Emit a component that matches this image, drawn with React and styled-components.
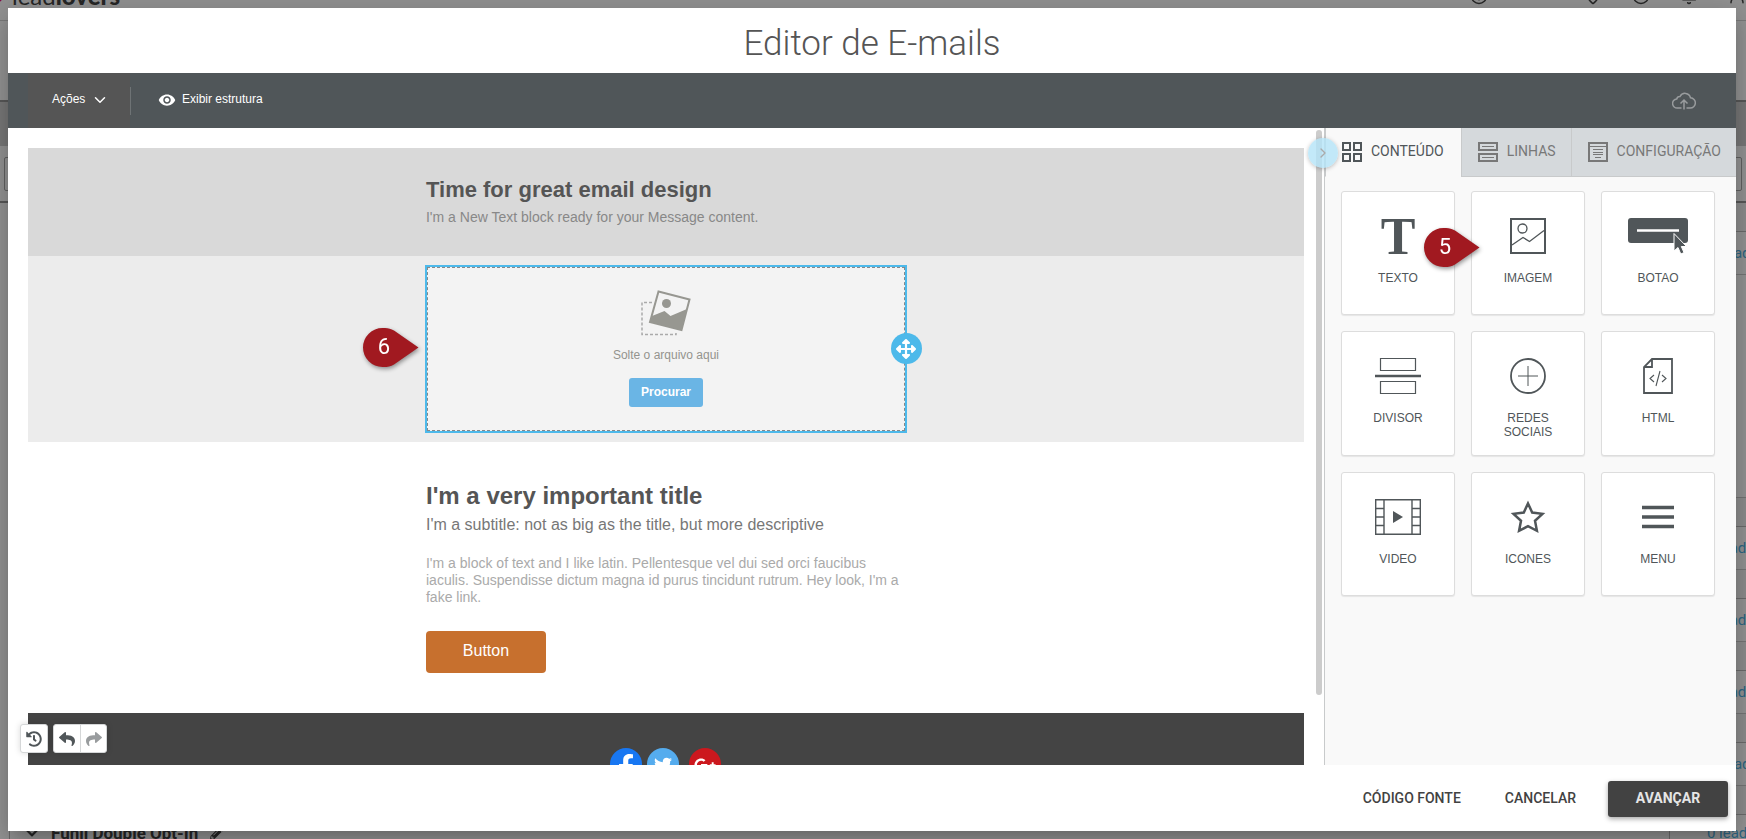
import React from 'react';
import styled, { createGlobalStyle, css } from 'styled-components';
import {
  FaArrowsAlt,
  FaChevronDown,
  FaFacebookF,
  FaGooglePlusG,
  FaHistory,
  FaPencilAlt,
  FaReply,
  FaShare,
  FaTwitter,
} from 'react-icons/fa';
import { MdRemoveRedEye } from 'react-icons/md';
import { Bell, ChevronDown, ChevronRight, CircleHelp, Clock, MapPin, UserRound } from 'lucide-react';

const GlobalStyle = createGlobalStyle`
  *, *::before, *::after {
    box-sizing: border-box;
  }

  body {
    margin: 0;
    background: #fff;
    font-family: 'Liberation Sans', Arial, sans-serif;
  }

  h1, h2, p {
    margin: 0;
  }

  button {
    margin: 0;
    padding: 0;
    border: 0;
    background: none;
    font-family: inherit;
    cursor: pointer;
  }
`;

/* ---------- page behind the modal ---------- */

const Screen = styled.div`
  position: relative;
  height: 100vh;
  overflow: hidden;
`;

const Page = styled.div`
  margin-top: -28px;
  font-family: Roboto, sans-serif;
  color: #444;
`;

const PageHeader = styled.header`
  display: flex;
  align-items: center;
  justify-content: space-between;
  height: 49px;
  border-bottom: 1px solid #d4d4d4;
`;

const Logo = styled.a`
  display: flex;
  align-items: center;
  font-family: Lato, sans-serif;
  font-size: 24px;
  line-height: 30px;
  color: #444;
  text-decoration: none;

  svg {
    color: #e3127e;
    margin-left: -12px;
  }

  b {
    font-weight: 900;
  }
`;

const PageNav = styled.nav`
  display: flex;
  align-items: center;
  gap: 30px;

  svg:first-child {
    margin-right: 66px;
  }
`;

const PageBand = styled.div`
  height: ${(props) => props.$height}px;
  background: ${(props) => (props.$dark ? '#d0d0d0' : '#fff')};
  border-bottom: ${(props) => (props.$strong ? 2 : 1)}px solid
    ${(props) => (props.$strong ? '#999' : props.$plain ? 'transparent' : '#c8c8c8')};
`;

const SearchBand = styled(PageBand)`
  padding: 11px 4px;
`;

const SearchInput = styled.input`
  display: block;
  width: 100%;
  height: 34px;
  border: 1px solid #aaa;
  border-radius: 2px;
  background: #fff;
`;

const FunnelList = styled.div`
  margin-left: 9px;
  border-left: 1px solid #bbb;
`;

const FunnelHead = styled.div`
  height: 29px;
  background: #f4f4f4;
  border-bottom: 1px solid #bbb;
`;

const LeadRow = styled.div`
  display: flex;
  justify-content: flex-end;
  align-items: center;
  height: 43px;
  margin-right: -16px;
  border-bottom: 1px solid #ccc;
`;

const LeadCell = styled.div`
  display: flex;
  align-items: center;
  justify-content: center;
  align-self: stretch;
  width: 64px;
`;

const LeadLink = styled.a`
  font-size: 15px;
  color: #4fb2e4;
  text-decoration: none;
  white-space: nowrap;
`;

const FunnelRow = styled.div`
  display: flex;
  align-items: center;
  height: 36px;
  margin-right: -16px;
  padding-left: 15px;
  gap: 12px;

  ${LeadCell} {
    width: 93px;
    padding-left: 30px;
    margin-left: auto;
    border-left: 1px solid #bbb;
  }
`;

const FunnelTitle = styled.h2`
  font-size: 17px;
  font-weight: 700;
  line-height: 20px;
`;

/* ---------- modal ---------- */

const Overlay = styled.div`
  position: absolute;
  inset: 0;
  display: flex;
  padding: 8px 10px 8px 8px;
  background: rgba(0, 0, 0, 0.43);
`;

const Modal = styled.div`
  flex: 1;
  min-width: 0;
  display: flex;
  flex-direction: column;
  background: #fff;
  box-shadow: 0 11px 15px -7px rgba(0, 0, 0, 0.2), 0 6px 26px 2px rgba(0, 0, 0, 0.18);
`;

const ModalTitle = styled.h1`
  height: 65px;
  padding-top: 6px;
  font-family: Roboto, sans-serif;
  font-size: 35px;
  font-weight: 300;
  line-height: 59px;
  text-align: center;
  color: #555;
`;

const Toolbar = styled.div`
  display: flex;
  align-items: center;
  height: 55px;
  padding: 0 40px 0 20px;
  background: #505659;
`;

const ToolbarButton = styled.button`
  display: flex;
  align-items: center;
  height: 55px;
  padding: 0 24px 4px;
  font-size: 12px;
  color: #fff;
  background: ${(props) => (props.$active ? '#555' : 'transparent')};

  svg {
    position: relative;
    top: 1px;
  }
`;

const ActionsButton = styled(ToolbarButton)`
  gap: 6px;
  width: 102px;
  padding-right: 20px;
`;

const StructureButton = styled(ToolbarButton)`
  gap: 6px;
  padding-left: 27px;
`;

const ToolbarDivider = styled.span`
  width: 1px;
  height: 28px;
  background: #6e7375;
`;

const CloudIcon = styled.svg`
  margin-left: auto;
`;

const Body = styled.div`
  position: relative;
  flex: 1;
  min-height: 0;
  display: flex;
`;

/* ---------- email canvas ---------- */

const Canvas = styled.main`
  position: relative;
  flex: 1;
  min-width: 0;
  display: flex;
`;

const EmailScroll = styled.div`
  flex: 1;
  padding: 20px 12px 0 20px;
  overflow: hidden;
`;

const Scrollbar = styled.div`
  width: 8px;
  padding: 2px 2px 0 0;
`;

const ScrollThumb = styled.div`
  width: 6px;
  height: 89%;
  border-radius: 3px;
  background: #ccc;
`;

const EmailRow = styled.section`
  display: flex;
  justify-content: center;
  padding: ${(props) => props.$padding};
  background: ${(props) => props.$background};
`;

const EmailColumn = styled.div`
  width: 480px;
`;

const Heading = styled.h2`
  font-size: ${(props) => props.$size}px;
  line-height: 28px;
  color: #555;
`;

const Subtitle = styled.p`
  margin-top: 4px;
  font-size: 16px;
  line-height: 22px;
  color: #777;
`;

const Intro = styled.p`
  margin-top: 4px;
  font-size: 14px;
  line-height: 18px;
  color: #888;
`;

const Paragraph = styled.p`
  margin: 19px 0 25px;
  font-size: 14px;
  line-height: 17px;
  color: #aaa;
`;

const EmailButton = styled.button`
  display: block;
  width: 120px;
  height: 42px;
  padding-bottom: 2px;
  border-radius: 4px;
  background: #c7702e;
  color: #fff;
  font-size: 16px;
`;

const ImageBlock = styled.div`
  position: relative;
  width: 482px;
  height: 168px;
  border: 2px solid #4db9ea;
  background: #f3f3f3;
`;

const DropArea = styled.div`
  display: flex;
  flex-direction: column;
  align-items: center;
  height: 100%;
  padding-top: 22px;
  border: 1px dashed #888;
`;

const DropText = styled.p`
  margin: 11px 0 15px;
  font-size: 12px;
  line-height: 16px;
  color: #93938e;
`;

const BrowseButton = styled.button`
  width: 74px;
  height: 29px;
  padding-bottom: 2px;
  border-radius: 3px;
  background: #6ab5e5;
  color: #fff;
  font-size: 12px;
  font-weight: 700;
`;

const MoveHandle = styled.button`
  position: absolute;
  top: 66px;
  right: -17px;
  display: flex;
  align-items: center;
  justify-content: center;
  width: 31px;
  height: 31px;
  border-radius: 50%;
  background: #4db9ea;
  color: #fff;
`;

const Socials = styled.div`
  display: flex;
  gap: 5px;

  a:last-child {
    margin-left: 5px;
  }
`;

const SocialLink = styled.a`
  display: flex;
  align-items: flex-start;
  justify-content: center;
  width: 32px;
  height: 32px;
  padding-top: ${(props) => props.$top}px;
  border-radius: 50%;
  background: ${(props) => props.$color};
  color: #fff;
`;

const HistoryBar = styled.div`
  position: absolute;
  left: 12px;
  bottom: 12px;
  display: flex;
  gap: 5px;
`;

const HistoryGroup = styled.div`
  display: flex;
  border: 1px solid #d5d7d8;
  border-radius: 3px;
  background: #fff;
  box-shadow: 0 0 6px rgba(0, 0, 0, 0.15);
`;

const HistoryButton = styled.button`
  display: flex;
  align-items: center;
  justify-content: center;
  width: 26px;
  height: 27px;
  color: ${(props) => (props.$muted ? '#999c9e' : '#505659')};

  & + & {
    border-left: 1px solid #d5d7d8;
  }
`;

/* ---------- sidebar ---------- */

const Sidebar = styled.aside`
  position: relative;
  flex: 0 0 412px;
  border-left: 1px solid #c8cacb;
  background: #f9f9f9;
`;

const CollapseButton = styled.button`
  position: absolute;
  top: 10px;
  left: -17px;
  display: flex;
  align-items: center;
  justify-content: center;
  width: 30px;
  height: 30px;
  border-radius: 50%;
  background: rgba(180, 228, 247, 0.8);
  box-shadow: 0 1px 4px rgba(0, 0, 0, 0.25);
  color: #aaa;
`;

const Tabs = styled.div`
  display: flex;
`;

const Tab = styled.button`
  display: flex;
  align-items: center;
  gap: 9px;
  height: 49px;
  padding: 0 15px 0 16px;
  border-left: 1px solid #c8cacb;
  border-bottom: 1px solid #c8cacb;
  background: #d5d9dc;
  color: #787878;
  font-family: Roboto, sans-serif;
  font-size: 14px;
  white-space: nowrap;

  &:last-child {
    flex: 1;
  }

  span {
    padding-bottom: 2px;
  }

  ${(props) =>
    props.$active &&
    css`
      padding-right: 17px;
      border-bottom-color: transparent;
      background: transparent;
      color: #505659;
    `}
`;

const Tiles = styled.div`
  display: grid;
  grid-template-columns: repeat(3, 1fr);
  gap: 16px;
  padding: 14px 21px 0 16px;
`;

const Tile = styled.button`
  position: relative;
  display: flex;
  flex-direction: column;
  align-items: center;
  gap: 17px;
  min-height: 124px;
  padding: 26px 16px 16px;
  border: 1px solid #ddd;
  border-radius: 3px;
  background: #fff;
  box-shadow: 0 1px 1px rgba(0, 0, 0, 0.08);
  color: #505659;
  font-size: 12px;
  line-height: 14px;
`;

const TextGlyph = styled.span`
  height: 36px;
  font-family: 'Liberation Serif', serif;
  font-size: 52px;
  font-weight: 700;
  line-height: 37px;
`;

/* ---------- step markers ---------- */

const Marker = styled.div`
  position: absolute;
  left: ${(props) => props.$left}px;
  top: ${(props) => props.$top}px;
  width: 56px;
  height: 40px;
  color: #fff;
  font-family: Roboto, sans-serif;
  font-size: 22px;
  line-height: 37px;
  filter: drop-shadow(1px 2px 2px rgba(0, 0, 0, 0.4));

  svg {
    position: absolute;
    inset: 0;
  }

  span {
    position: relative;
    display: block;
    width: 42px;
    text-align: center;
  }
`;

/* ---------- footer ---------- */

const ModalFooter = styled.footer`
  display: flex;
  align-items: center;
  justify-content: flex-end;
  height: 66px;
  padding: 2px 8px 0;
  gap: 8px;
`;

const FooterButton = styled.button`
  height: 36px;
  padding: 0 18px 2px;
  border-radius: 3px;
  font-family: Roboto, sans-serif;
  font-size: 14px;
  font-weight: 500;
  color: #424242;
`;

const NextButton = styled(FooterButton)`
  width: 120px;
  margin-left: 6px;
  background: #424242;
  color: #e6e6e6;
  font-weight: 700;
  box-shadow: 0 2px 5px rgba(0, 0, 0, 0.35);
`;

const StepMarker = ({ number, left, top }) => (
  <Marker $left={left} $top={top}>
    <svg width="56" height="40" viewBox="0 0 56 40">
      <path
        d="M55.500 19.500 L31 36.500 C27.500 38.500 23.500 39.200 19.500 39 A19.500 19.500 0 0 1 19.500 0 C23.500 -0.200 27.500 0.500 31 2.500 Z"
        fill="#a11920"
      />
    </svg>
    <span>{number}</span>
  </Marker>
);

const ContentIcon = () => (
  <svg width="20" height="20" viewBox="0 0 20 20" fill="none" stroke="#505659" strokeWidth="2">
    <path d="M1 1h7v7H1zM12 1h7v7h-7zM1 12h7v7H1zM12 12h7v7h-7z" />
  </svg>
);

const RowsIcon = () => (
  <svg width="20" height="20" viewBox="0 0 20 20" fill="none" stroke="#787878" strokeWidth="2">
    <path d="M1 1h18v7H1zM1 12h18v7H1z" />
    <path d="M4 4.500h12M4 15.500h12" strokeWidth="1" />
  </svg>
);

const SettingsIcon = () => (
  <svg width="20" height="20" viewBox="0 0 20 20" fill="none" stroke="#787878">
    <path d="M1 1h18v18H1z" strokeWidth="2" />
    <path d="M2 4.500h16M5 7.500h10M5 10.500h10M5 12.500h10M7 15.500h6" />
  </svg>
);

const ImageIcon = () => (
  <svg width="36" height="36" viewBox="0 0 36 36" fill="none" stroke="#505659">
    <path d="M1 1h34v34H1z" strokeWidth="2" />
    <circle cx="12.500" cy="10.500" r="4.500" strokeWidth="1.300" />
    <path d="M2 27l11-7.500 6.500 4L34 12.500" strokeWidth="1.300" />
  </svg>
);

const ButtonIcon = () => (
  <svg width="60" height="36" viewBox="0 0 60 36">
    <rect width="60" height="25" rx="3" fill="#505659" />
    <path d="M9 12.500h42" stroke="#fff" strokeWidth="2.500" />
    <path
      d="M46 15.500v17.500l4-3.500 2.800 6.500 3.200-1.400-2.700-6.100h5.200z"
      fill="#505659"
      stroke="#fff"
      strokeWidth="1"
    />
  </svg>
);

const DividerIcon = () => (
  <svg width="46" height="36" viewBox="0 0 46 36" fill="none" stroke="#505659">
    <path d="M5.500.5h35v12h-35zM5.500 23.500h35v12h-35z" strokeWidth="1.200" />
    <path d="M0 18h46" strokeWidth="2.500" />
  </svg>
);

const SocialIcon = () => (
  <svg width="36" height="36" viewBox="0 0 36 36" fill="none" stroke="#505659">
    <circle cx="18" cy="18" r="17" strokeWidth="1.800" />
    <path d="M8 18h20M18 8v20" strokeWidth="1" />
  </svg>
);

const HtmlIcon = () => (
  <svg width="30" height="36" viewBox="0 0 30 36" fill="none" stroke="#505659">
    <path d="M9 1h20v34H1V9z M9 1v8H1" strokeWidth="1.800" />
    <path d="M11 17l-4 3.500 4 3.500M19 17l4 3.500-4 3.500M17 13l-4 15" strokeWidth="1.100" />
  </svg>
);

const VideoIcon = () => (
  <svg width="46" height="36" viewBox="0 0 46 36" fill="none" stroke="#505659">
    <path
      d="M.7.7h44.600v34.600H.7zM9 1v34M37 1v34M1 9.500h8M1 18h8M1 26.500h8M37 9.500h8M37 18h8M37 26.500h8"
      strokeWidth="1.400"
    />
    <path d="M18 12v12l10-6z" fill="#505659" stroke="none" />
  </svg>
);

const StarIcon = () => (
  <svg width="36" height="36" viewBox="0 0 36 36" fill="none" stroke="#505659" strokeWidth="2.500">
    <path d="M18 4.500l4.200 9 10.300 1.300-7.500 7 1.900 10L18 27.200l-8.900 4.600 1.900-10-7.500-7 10.300-1.300z" />
  </svg>
);

const MenuIcon = () => (
  <svg width="36" height="36" viewBox="0 0 36 36" stroke="#505659" strokeWidth="3.500">
    <path d="M2 8.500h32M2 18h32M2 27.500h32" />
  </svg>
);

const DropIcon = () => (
  <svg width="50" height="46" viewBox="0 0 50 46" fill="none">
    <path d="M11 12.500H1v32h34V43" stroke="#aaa" strokeWidth="1.500" strokeDasharray="3 2" />
    <path d="M17.500 1.500L48.500 9.500 40.500 40 9 32z" fill="#f3f3f3" stroke="#979791" strokeWidth="2" />
    <circle cx="25.500" cy="13.500" r="4.500" fill="#979791" />
    <path d="M11 26l12.500-5 6 5 16.500-7-5.500 21L9 32z" fill="#979791" />
  </svg>
);

const tiles = [
  { label: 'TEXTO', icon: <TextGlyph aria-hidden="true">T</TextGlyph> },
  { label: 'IMAGEM', icon: <ImageIcon />, step: 5 },
  { label: 'BOTAO', icon: <ButtonIcon /> },
  { label: 'DIVISOR', icon: <DividerIcon /> },
  { label: 'REDES SOCIAIS', icon: <SocialIcon /> },
  { label: 'HTML', icon: <HtmlIcon /> },
  { label: 'VIDEO', icon: <VideoIcon /> },
  { label: 'ICONES', icon: <StarIcon /> },
  { label: 'MENU', icon: <MenuIcon /> },
];

const funnels = ['0 leads', '0 leads', '0 leads', '10 leads'];

const Leads = ({ children }) => (
  <LeadCell>
    <LeadLink href="#leads">{children}</LeadLink>
  </LeadCell>
);

const BackgroundPage = () => (
  <Page aria-hidden="true">
    <PageHeader>
      <Logo href="#home">
        <ChevronRight size={24} strokeWidth={4} />
        <span>lead</span>
        <b>lovers</b>
      </Logo>
      <PageNav>
        <CircleHelp size={18} />
        <MapPin size={18} />
        <Clock size={18} />
        <Bell size={18} />
        <UserRound size={18} />
      </PageNav>
    </PageHeader>
    <PageBand $height={81} $strong />
    <PageBand $height={44} $dark $plain />
    <SearchBand $height={57} $strong>
      <SearchInput aria-label="Buscar" />
    </SearchBand>
    <FunnelList>
      <FunnelHead />
      <LeadRow>
        <Leads>10 leads</Leads>
      </LeadRow>
      <PageBand $height={223} />
      {funnels.map((leads, index) => (
        <React.Fragment key={index}>
          <FunnelHead />
          <LeadRow>
            <Leads>{leads}</Leads>
          </LeadRow>
        </React.Fragment>
      ))}
      <FunnelHead />
      <FunnelRow>
        <FaChevronDown size={14} />
        <FunnelTitle>Funil Double Opt-In</FunnelTitle>
        <FaPencilAlt size={14} />
        <Leads>0 leads</Leads>
      </FunnelRow>
    </FunnelList>
  </Page>
);

const EmailCanvas = () => (
  <Canvas>
    <EmailScroll>
      <EmailRow $background="#d9d9d9" $padding="28px 0 30px">
        <EmailColumn>
          <Heading $size={22}>Time for great email design</Heading>
          <Intro>I'm a New Text block ready for your Message content.</Intro>
        </EmailColumn>
      </EmailRow>
      <EmailRow $background="#ececec" $padding="9px 0">
        <ImageBlock>
          <DropArea>
            <DropIcon />
            <DropText>Solte o arquivo aqui</DropText>
            <BrowseButton>Procurar</BrowseButton>
          </DropArea>
          <MoveHandle aria-label="Mover">
            <FaArrowsAlt size={20} />
          </MoveHandle>
          <StepMarker number={6} left={-64} top={61} />
        </ImageBlock>
      </EmailRow>
      <EmailRow $background="#fff" $padding="40px 0">
        <EmailColumn>
          <Heading $size={24}>I'm a very important title</Heading>
          <Subtitle>I'm a subtitle: not as big as the title, but more descriptive</Subtitle>
          <Paragraph>
            I'm a block of text and I like latin. Pellentesque vel dui sed orci faucibus iaculis.
            Suspendisse dictum magna id purus tincidunt rutrum. Hey look, I'm a fake link.
          </Paragraph>
          <EmailButton>Button</EmailButton>
        </EmailColumn>
      </EmailRow>
      <EmailRow $background="#444" $padding="35px 0">
        <Socials>
          <SocialLink href="#facebook" aria-label="Facebook" $color="#1877f2" $top={6}>
            <FaFacebookF size={26} />
          </SocialLink>
          <SocialLink href="#twitter" aria-label="Twitter" $color="#55acee" $top={8}>
            <FaTwitter size={18} />
          </SocialLink>
          <SocialLink href="#google" aria-label="Google+" $color="#cc181e" $top={6}>
            <FaGooglePlusG size={22} />
          </SocialLink>
        </Socials>
      </EmailRow>
    </EmailScroll>
    <Scrollbar>
      <ScrollThumb />
    </Scrollbar>
    <HistoryBar>
      <HistoryGroup>
        <HistoryButton aria-label="Histórico">
          <FaHistory size={16} />
        </HistoryButton>
      </HistoryGroup>
      <HistoryGroup>
        <HistoryButton aria-label="Desfazer">
          <FaReply size={16} />
        </HistoryButton>
        <HistoryButton aria-label="Refazer" $muted>
          <FaShare size={16} />
        </HistoryButton>
      </HistoryGroup>
    </HistoryBar>
  </Canvas>
);

const ContentPanel = () => (
  <Sidebar>
    <Tabs>
      <Tab $active>
        <ContentIcon />
        <span>CONTEÚDO</span>
      </Tab>
      <Tab>
        <RowsIcon />
        <span>LINHAS</span>
      </Tab>
      <Tab>
        <SettingsIcon />
        <span>CONFIGURAÇÃO</span>
      </Tab>
    </Tabs>
    <Tiles>
      {tiles.map((tile) => (
        <Tile key={tile.label}>
          {tile.icon}
          {tile.label}
          {tile.step && <StepMarker number={tile.step} left={-48} top={36} />}
        </Tile>
      ))}
    </Tiles>
    <CollapseButton aria-label="Recolher painel">
      <ChevronRight size={16} />
    </CollapseButton>
  </Sidebar>
);

const App = () => {
  return (
    <Screen>
      <GlobalStyle />
      <BackgroundPage />
      <Overlay>
        <Modal role="dialog" aria-labelledby="editor-title">
          <ModalTitle id="editor-title">Editor de E-mails</ModalTitle>
          <Toolbar>
            <ActionsButton $active>
              Ações
              <ChevronDown size={18} />
            </ActionsButton>
            <ToolbarDivider />
            <StructureButton>
              <MdRemoveRedEye size={18} />
              Exibir estrutura
            </StructureButton>
            <CloudIcon width="24" height="18" viewBox="0 0 24 18" fill="none" stroke="#999c9e" strokeWidth="1.500">
              <path d="M9.500 16H5.500a4.500 4.500 0 0 1-.8-9A3.200 3.200 0 0 1 8 4.500 5.600 5.600 0 0 1 18.500 5.800 5.100 5.100 0 0 1 18 16h-3.500" />
              <path d="M12 17.500V8M8.500 11.500L12 8l3.500 3.500" />
            </CloudIcon>
          </Toolbar>
          <Body>
            <EmailCanvas />
            <ContentPanel />
          </Body>
          <ModalFooter>
            <FooterButton>CÓDIGO FONTE</FooterButton>
            <FooterButton>CANCELAR</FooterButton>
            <NextButton>AVANÇAR</NextButton>
          </ModalFooter>
        </Modal>
      </Overlay>
    </Screen>
  );
};

export default App;
